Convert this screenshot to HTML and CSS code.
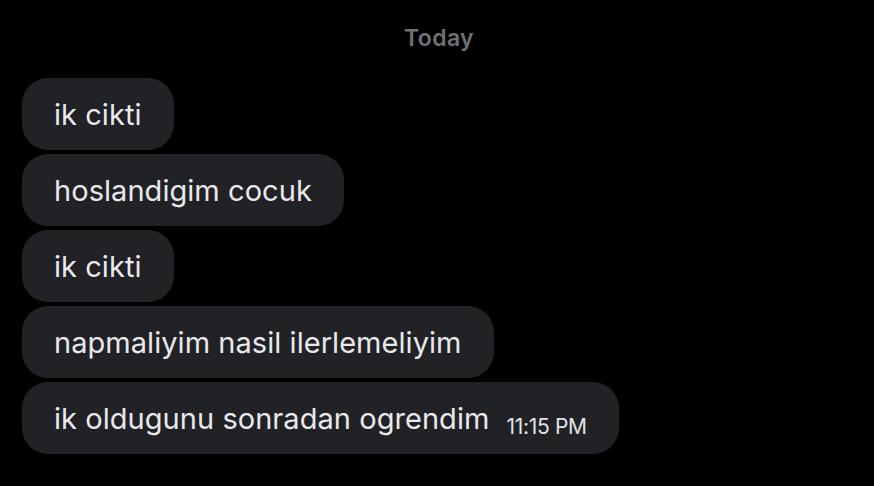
FILE: index.html
```html
<!DOCTYPE html>
<html>
<head>
<meta charset="utf-8">
<link rel="stylesheet" href="styles.css">
</head>
<body>
<div class="chat">
  <div class="day">Today</div>
  <div class="messages">
    <div class="bubble">ik cikti</div>
    <div class="bubble">hoslandigim cocuk</div>
    <div class="bubble">ik cikti</div>
    <div class="bubble">napmaliyim nasil ilerlemeliyim</div>
    <div class="bubble">ik oldugunu sonradan ogrendim<span class="time">11:15 PM</span></div>
  </div>
</div>
</body>
</html>
```
FILE: styles.css
```css
html, body {
  margin: 0;
  padding: 0;
  background: #000;
  height: 100%;
}
.chat {
  font-family: Inter, "Noto Sans", sans-serif;
  color: #e9e9eb;
  padding: 22px 22px 0 22px;
}
.day {
  text-align: center;
  font-size: 23px;
  font-weight: 600;
  color: #6f7074;
  line-height: 32px;
  margin-left: 4px;
  height: 34px;
  letter-spacing: 0.4px;
}
.messages {
  margin-top: 22px;
  display: flex;
  flex-direction: column;
  align-items: flex-start;
  gap: 4px;
}
.bubble {
  background: #212226;
  border-radius: 26px;
  height: 72px;
  display: flex;
  align-items: center;
  padding: 0 32px;
  font-size: 29px;
  letter-spacing: 0.05px;
  box-sizing: border-box;
}
.time {
  font-size: 21px;
  margin-left: 17px;
  margin-top: 16px;
  color: #e3e3e5;
  letter-spacing: -0.3px;
}
```
